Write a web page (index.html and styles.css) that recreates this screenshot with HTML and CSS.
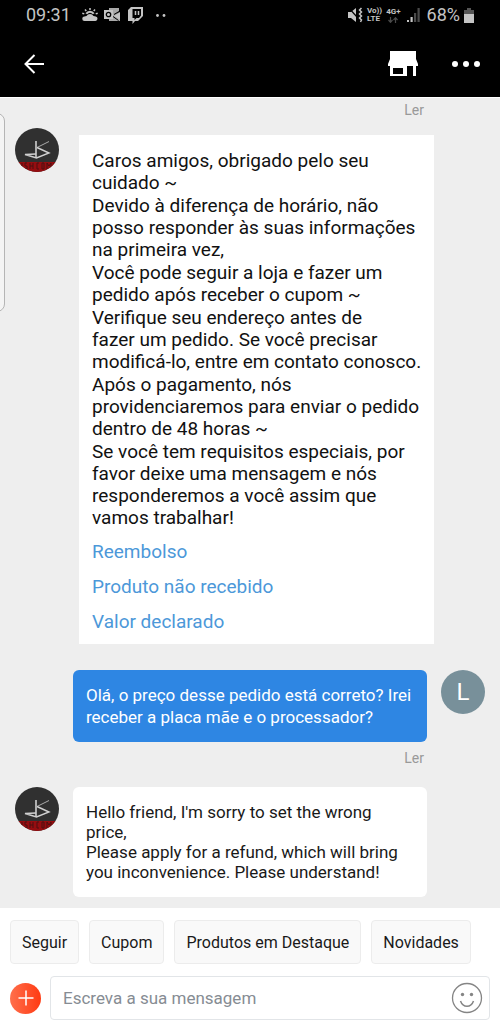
FILE: index.html
```html
<!DOCTYPE html>
<html lang="pt-BR">
<head>
<meta charset="utf-8">
<meta name="viewport" content="width=device-width, initial-scale=1">
<title>Chat</title>
<link rel="stylesheet" href="styles.css">
</head>
<body>
<svg class="defs" aria-hidden="true">
  <symbol id="shop-avatar" viewBox="0 0 44 44">
    <clipPath id="round"><circle cx="22" cy="22" r="22"/></clipPath>
    <g clip-path="url(#round)">
      <rect width="44" height="44" fill="#303030"/>
      <rect y="34" width="44" height="10" fill="#960d10"/>
      <path d="M7 35v6M12 35h-2v3h2v3h-2M15 35v6M18 35v6M15 38h3M24 35h-2v6h2M27 35h2v6h-2zM32 41v-6l2 3 2-3v6M39 35v4" fill="none" stroke="#4c1010" stroke-width="1"/>
      <path d="M21 13v17" stroke="#d0d0d0" stroke-width="1.600"/>
      <path d="M34 13.500 22 19.500" stroke="#aaa" stroke-width="1"/>
      <path d="M22 19.500 34 25 21.500 30 10 26.500 21 26" fill="none" stroke="#d0d0d0" stroke-width="1.400"/>
    </g>
  </symbol>
</svg>
<div class="app">
  <header class="top">
    <div class="status">
      <span class="clock">09:31</span>
      <svg class="weather" width="16" height="14" viewBox="0 0 16 14">
        <path d="M2.500 13h11a2.300 2.300 0 0 0 .3-4.500L11.500 8a4 4 0 0 0-7 0l-2 .5a2.200 2.200 0 0 0 0 4.500z" fill="#c4c4c4"/>
        <path d="M4.300 5.800a4.300 4.300 0 0 1 7.400 0" fill="none" stroke="#c4c4c4" stroke-width="2"/>
        <path d="M8 0v2M3 1.500l1.300 1.400M13 1.500l-1.300 1.400M.3 5.200l2 .7M15.700 5.200l-2 .7" fill="none" stroke="#c4c4c4" stroke-width="1.500"/>
      </svg>
      <svg class="mail" width="17" height="14" viewBox="0 0 17 14">
        <path d="M5 0h10v4l-5 3 6-3v9H5z" fill="#a9a9a9"/><path d="M16 4.500v7l-6-3.500z" fill="#c4c4c4"/><path d="M9 8.500l5.500 4M10 6.500l5-3" stroke="#000" stroke-width="1"/>
        <rect y="2" width="9" height="9" fill="#c4c4c4"/><circle cx="4.500" cy="6.500" r="2.200" fill="none" stroke="#000" stroke-width="1.300"/>
      </svg>
      <svg class="twitch" width="15" height="17" viewBox="0 0 15 17">
        <path d="M3 0h12v9l-5 5H7l-2.500 3v-3H0V3z" fill="#c4c4c4"/><path d="M4.500 2h8.500v6.500L11 11H8.500L6.500 13v-2h-2z" fill="#000"/><path d="M7.500 4v4M10.500 4v4" stroke="#c4c4c4" stroke-width="1.500"/>
      </svg>
      <svg class="more-dots" width="10" height="3" viewBox="0 0 10 3"><circle cx="1.500" cy="1.500" r="1.400" fill="#c4c4c4"/><circle cx="8" cy="1.500" r="1.400" fill="#c4c4c4"/></svg>
      <span class="spacer"></span>
      <svg class="mute" width="16" height="16" viewBox="0 0 16 16">
        <path d="M1 5h3l5-4v14l-5-4H1z" fill="#c4c4c4"/><path d="M1 0l9 10" stroke="#000" stroke-width="1.200"/><path d="M14.500 1 12.500 3l2 2-2 2 2 2-2 2 2 2-1 2" fill="none" stroke="#c4c4c4" stroke-width="1.500"/>
      </svg>
      <span class="volte">Vo))<br>LTE</span>
      <span class="net">4G+
        <svg width="10" height="6" viewBox="0 0 10 6"><path d="M2.500 0v5M.5 3l2 2.300 2-2.300M7.500 6V1M5.500 3l2-2.300 2 2.300" fill="none" stroke="#4a4a4a" stroke-width="1.200"/></svg>
      </span>
      <svg class="signal" width="13" height="14" viewBox="0 0 13 14"><path d="M0 12h2v2H0zM3.500 9h2.200v5H3.500z" fill="#c4c4c4"/><path d="M7 5h2.200v9H7zM10.500 0h2.200v14h-2.200z" fill="#4a4a4a"/></svg>
      <span class="charge">68%</span>
      <svg class="battery" width="10" height="15" viewBox="0 0 10 15"><path d="M3 0h4v2h3v5H0V2h3z" fill="#555"/><path d="M0 6h10v9H0z" fill="#c4c4c4"/></svg>
    </div>
    <nav class="nav">
      <button class="icon-btn" aria-label="Voltar"><svg width="20" height="20" viewBox="0 0 20 20"><path d="M20 10H2M10.500 1 1.500 10l9 9" fill="none" stroke="#fff" stroke-width="2"/></svg></button>
      <span class="spacer"></span>
      <button class="icon-btn" aria-label="Loja"><svg width="30" height="26" viewBox="0 0 30 26"><path fill-rule="evenodd" d="M2 0h26v8l2 5v2h-2v10h-3V15h-6v10H2V15H0v-2l2-5zM5 17v6h10v-6z" fill="#fff"/></svg></button>
      <button class="icon-btn menu" aria-label="Mais opções"><svg width="28" height="6" viewBox="0 0 28 6"><g fill="#fff"><circle cx="3" cy="3" r="3"/><circle cx="14" cy="3" r="3"/><circle cx="25" cy="3" r="3"/></g></svg></button>
    </nav>
  </header>
  <main class="chat">
    <div class="edge-panel"></div>
    <p class="read">Ler</p>
    <div class="row auto">
      <svg class="avatar" role="img" aria-label="Loja"><use href="#shop-avatar"/></svg>
      <div class="card">
        <div class="text">
          <p>Caros amigos, obrigado pelo seu<br>cuidado ~</p>
          <p>Devido à diferença de horário, não<br>posso responder às suas informações<br>na primeira vez,</p>
          <p>Você pode seguir a loja e fazer um<br>pedido após receber o cupom ~</p>
          <p>Verifique seu endereço antes de<br>fazer um pedido. Se você precisar<br>modificá-lo, entre em contato conosco.</p>
          <p>Após o pagamento, nós<br>providenciaremos para enviar o pedido<br>dentro de 48 horas ~</p>
          <p>Se você tem requisitos especiais, por<br>favor deixe uma mensagem e nós<br>responderemos a você assim que<br>vamos trabalhar!</p>
        </div>
        <div class="links">
          <a href="#reembolso">Reembolso</a>
          <a href="#produto">Produto não recebido</a>
          <a href="#valor">Valor declarado</a>
        </div>
      </div>
    </div>
    <div class="row mine">
      <p class="bubble sent">Olá, o preço desse pedido está correto? Irei<br>receber a placa mãe e o processador?</p>
      <span class="avatar letter">L</span>
    </div>
    <p class="read after">Ler</p>
    <div class="row">
      <svg class="avatar" role="img" aria-label="Loja"><use href="#shop-avatar"/></svg>
      <p class="bubble received">Hello friend, I'm sorry to set the wrong<br>price,<br>Please apply for a refund, which will bring<br>you inconvenience. Please understand!</p>
    </div>
  </main>
  <footer class="composer">
    <div class="chips">
      <button class="chip">Seguir</button>
      <button class="chip">Cupom</button>
      <button class="chip">Produtos em Destaque</button>
      <button class="chip">Novidades</button>
    </div>
    <div class="entry">
      <button class="add" aria-label="Anexar"><svg width="16" height="16" viewBox="0 0 16 16"><path d="M8 .5v15M.5 8h15" stroke="#fff" stroke-width="1.500"/></svg></button>
      <div class="field">
        <input type="text" aria-label="Mensagem" placeholder="Escreva a sua mensagem">
        <button class="icon-btn" aria-label="Emoji"><svg width="32" height="32" viewBox="0 0 32 32"><circle cx="16" cy="16" r="14.500" fill="none" stroke="#858585" stroke-width="1.300"/><circle cx="11.500" cy="12.500" r="1.700" fill="#858585"/><circle cx="20.500" cy="12.500" r="1.700" fill="#858585"/><path d="M9.500 19c2.500 7 10.500 7 13 0" fill="none" stroke="#858585" stroke-width="1.500"/></svg></button>
      </div>
    </div>
  </footer>
</div>
</body>
</html>
```
FILE: styles.css
```css
* { box-sizing: border-box; }
body { margin: 0; font-family: Roboto, "Liberation Sans", sans-serif; color: #191919; background: #eee; }
p { margin: 0; }
button { font: inherit; color: inherit; border: 0; padding: 0; background: none; cursor: pointer; }
svg { display: block; flex: none; }
.defs { position: absolute; width: 0; height: 0; }
.app { min-height: 100vh; display: flex; flex-direction: column; }
.spacer { flex: 1; }
.top { background: #000; color: #c4c4c4; }
.status { display: flex; align-items: center; height: 30px; padding: 0 26px; }
.clock, .charge { font-size: 18px; line-height: 30px; }
.weather { margin-left: 11px; }
.mail { margin-left: 6px; }
.twitch { margin-left: 7px; }
.more-dots { margin-left: 13px; }
.volte, .net { font-size: 8px; line-height: 8px; font-weight: 700; }
.volte { margin-left: 4px; }
.net { display: flex; flex-direction: column; align-items: center; gap: 1px; margin-left: 4px; }
.signal { margin: 0 7px 0 6px; }
.battery { margin-left: 4px; }
.nav { display: flex; align-items: center; height: 67px; padding: 0 20px 0 24px; }
.icon-btn { display: flex; align-items: center; justify-content: center; flex: none; }
.menu { margin-left: 34px; }
.chat { position: relative; flex: 1; border-top: 1px solid #fff; padding: 4px 15px 10px; overflow: hidden; }
.edge-panel { position: absolute; left: -12px; top: 15px; width: 17px; height: 199px; border: 1px solid #b5b5b5; border-radius: 8px; background: #f4f4f4; }
.read { font-size: 14px; line-height: 16px; color: #999; text-align: right; padding-right: 61px; }
.read.after { margin-top: 8px; }
.row { display: flex; align-items: flex-start; gap: 14px; padding-right: 58px; margin-top: 21px; }
.row.auto { margin-top: 10px; }
.avatar { width: 44px; height: 44px; flex: none; }
.letter { border-radius: 50%; background: #78909a; color: #fff; font-size: 24px; line-height: 44px; text-align: center; }
.card { flex: 1; margin: 7px -6px 0 6px; padding: 15px 13px 11px; background: #fff; white-space: nowrap; }
.text { display: flex; flex-direction: column; gap: 1px; font-size: 19px; line-height: 22px; color: #111; }
.links { display: flex; flex-direction: column; gap: 13px; margin-top: 12px; font-size: 19px; line-height: 22px; }
.links a { color: #4c98d9; text-decoration: none; }
.row.mine { padding-right: 0; padding-left: 58px; margin-top: 26px; }
.bubble { flex: 1; border-radius: 6px; padding: 15px 13px; white-space: nowrap; }
.sent { padding: 14px 13px; background: #2e86e3; color: #fff; font-size: 17px; line-height: 22px; }
.received { background: #fff; font-size: 17px; line-height: 20px; }
.composer { background: #fff; padding: 12px 10px 8px; }
.chips { display: flex; gap: 10px; overflow: hidden; }
.chip { flex: none; height: 44px; padding: 0 11px; border: 1px solid #ececec; border-radius: 4px; background: #f9f9f9; font-size: 16px; white-space: nowrap; }
.entry { display: flex; align-items: center; gap: 9px; margin-top: 12px; }
.add { flex: none; width: 31px; height: 31px; border-radius: 50%; display: flex; align-items: center; justify-content: center; background: linear-gradient(90deg, #ff6f4c, #ff3a12); }
.field { flex: 1; display: flex; align-items: center; height: 44px; padding: 0 6px 0 12px; border: 1px solid #e2e5e8; border-radius: 4px; }
.field input { flex: 1; min-width: 0; border: 0; outline: 0; padding: 0; background: none; font: inherit; font-size: 17px; color: #191919; }
.field input::placeholder { color: #868c93; opacity: 1; }
```
